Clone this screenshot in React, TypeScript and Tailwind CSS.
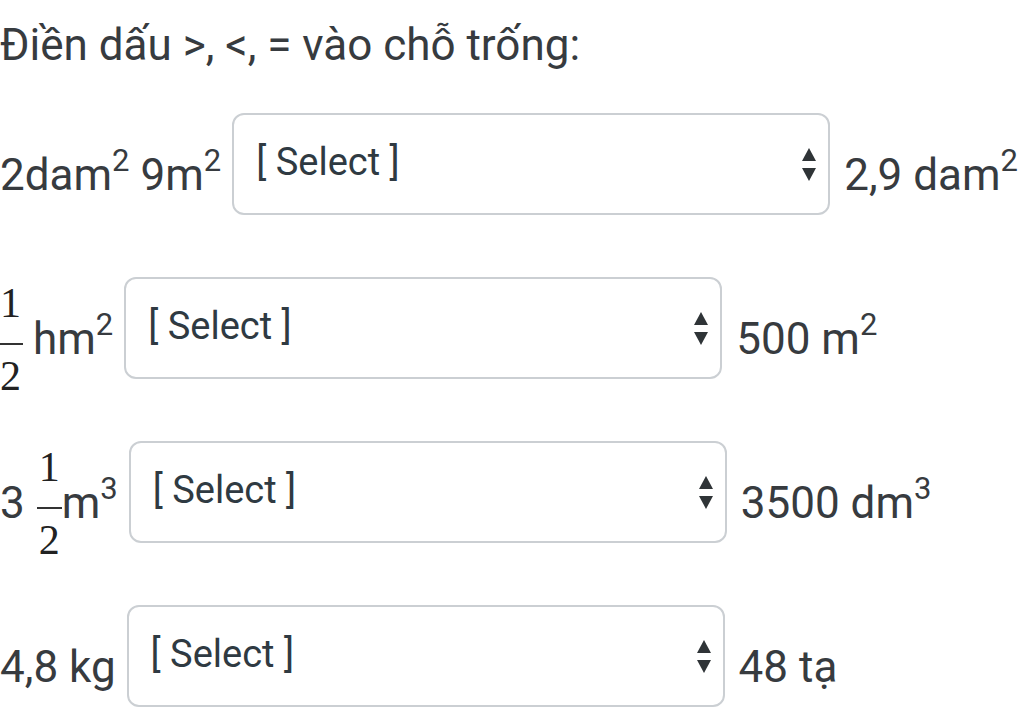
import React from "react";

const Arrows: React.FC = () => (
  <svg width="14" height="33" viewBox="0 0 14 33" className="shrink-0">
    <path d="M0 13 L7 0 L14 13 Z" fill="#2f3437" />
    <path d="M0 20 L14 20 L7 33 Z" fill="#2f3437" />
  </svg>
);

const SelectBox: React.FC = () => (
  <div className="w-[598px] h-[102px] shrink-0 border-2 border-[#cbcfd3] rounded-[12px] bg-white flex items-center pl-[22px] pr-[12px]">
    <span className="flex-1 text-[38px] leading-none text-[#2f3a42] -translate-y-[2px]">[ Select ]</span>
    <Arrows />
  </div>
);

const Frac: React.FC = () => (
  <span className="inline-flex flex-col items-center font-['Liberation_Serif',serif] text-[42px] text-[#222] w-[25px]">
    <span className="leading-[40px]">1</span>
    <span className="mt-[20px] h-[2px] w-full bg-[#333]" />
    <span className="mt-[11px] leading-[40px]">2</span>
  </span>
);

const Sup: React.FC<{ n: string }> = ({ n }) => (
  <sup className="text-[31px] -top-[0.62em]">{n}</sup>
);

type Row = { left: React.ReactNode; right: React.ReactNode };

const rows: Row[] = [
  {
    left: (
      <span>
        2dam<Sup n="2" /> 9m<Sup n="2" />
      </span>
    ),
    right: (
      <span>
        2,9 dam<Sup n="2" />
      </span>
    ),
  },
  {
    left: (
      <span className="flex items-center -ml-[2px]">
        <Frac />
        <span className="ml-[10px]">
          hm<Sup n="2" />
        </span>
      </span>
    ),
    right: (
      <span>
        500 m<Sup n="2" />
      </span>
    ),
  },
  {
    left: (
      <span className="flex items-center">
        <span>3</span>
        <span className="ml-[12px] flex">
          <Frac />
        </span>
        <span>
          m<Sup n="3" />
        </span>
      </span>
    ),
    right: (
      <span>
        3500 dm<Sup n="3" />
      </span>
    ),
  },
  {
    left: <span>4,8 kg</span>,
    right: <span>48 tạ</span>,
  },
];

const App: React.FC = () => {
  return (
    <div className="min-h-screen bg-white text-[#373b3f] font-['Roboto',sans-serif] overflow-hidden">
      <p className="pt-[20px] text-[44px] leading-[50px] whitespace-nowrap">
        Điền dấu &gt;, &lt;, = vào chỗ trống:
      </p>

      <div className="mt-[43px] flex flex-col gap-[62px]">
        {rows.map((row, i) => (
          <div key={i} className="flex items-center h-[102px] text-[44px] leading-[50px] whitespace-nowrap">
            <div className="pt-[22px] mr-[11px] flex items-center">{row.left}</div>
            <SelectBox />
            <div className="pt-[22px] ml-[14px]">{row.right}</div>
          </div>
        ))}
      </div>
    </div>
  );
};

export default App;
